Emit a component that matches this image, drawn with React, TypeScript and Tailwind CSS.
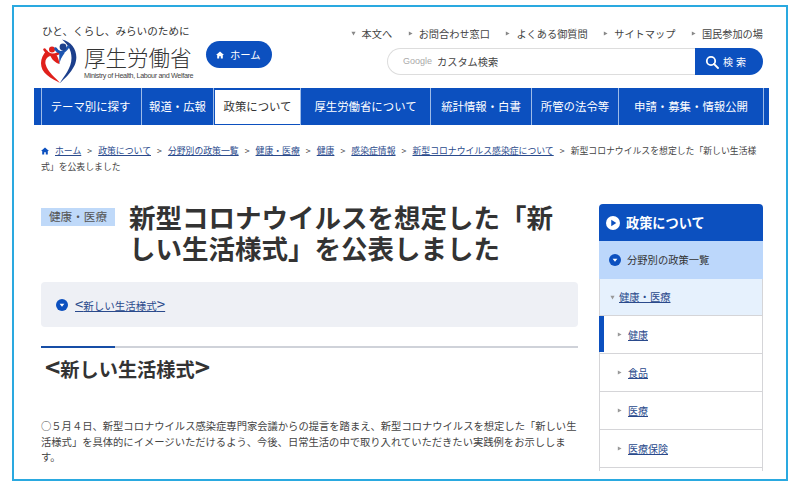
const font = { fontFamily: '"Noto Sans CJK JP", "Noto Sans", sans-serif' };

function Logo() {
  return (
    <svg width="38" height="44" viewBox="3 3 38 44" className="shrink-0 -mt-[1px]">
      <path d="M9 14 C1 22 1 33 9 39 C13 42.5 18 44.5 22 47 C18 42 9.5 36 7.5 28 C6.8 24 8.5 21.5 12 20 Z" fill="#e0201b" />
      <path d="M6.5 13.5 C10 19 15 20 20 17.5" fill="none" stroke="#e0201b" strokeWidth="2.6" strokeLinecap="round" />
      <path d="M12 19 C14 24 17 26.5 21.5 28 C21 24 20 21 18 18.5 Z" fill="#e0201b" />
      <circle cx="14" cy="13.5" r="3" fill="#e0201b" />
      <path d="M24 3.5 C36 6 41.5 19 36.5 29.5 C32.5 37.5 27 42 22 47 C26 40 33.5 32 33.5 22 C33.5 14 29.5 8 24 3.5 Z" fill="#1c3f8c" />
      <path d="M17.5 12.5 C20 17 25 18.5 30.5 10.5" fill="none" stroke="#1c55b0" strokeWidth="2.6" strokeLinecap="round" />
      <path d="M21.5 28 C22 24 23.5 21 27 16.5 L21 15.5 C21.5 20 21 24 21.5 28 Z" fill="#1c55b0" />
      <circle cx="25" cy="11" r="3.4" fill="#1c3f8c" />
    </svg>
  );
}

function HomeIcon({ size = 9, color = "#fff" }: { size?: number; color?: string }) {
  return (
    <svg width={size} height={size} viewBox="0 0 10 10" className="shrink-0">
      <path d="M5 0.5 L10 5 H8.5 V9.5 H6 V6.5 H4 V9.5 H1.5 V5 H0 Z" fill={color} />
    </svg>
  );
}

function Tri({ dir = "right", color = "#888" }: { dir?: "right" | "down"; color?: string }) {
  return (
    <svg width="5" height="5" viewBox="0 0 6 6" className="shrink-0">
      <path d={dir === "right" ? "M1 0.5 L5.5 3 L1 5.5 Z" : "M0.5 1 L5.5 1 L3 5.5 Z"} fill={color} />
    </svg>
  );
}

function Disc({ size, dir }: { size: number; dir: "right" | "down" }) {
  return (
    <svg width={size} height={size} viewBox="0 0 12 12" className="shrink-0">
      <circle cx="6" cy="6" r="6" fill={dir === "right" ? "#fff" : "#0c50bf"} />
      <path d={dir === "right" ? "M4.5 3.2 L8.8 6 L4.5 8.8 Z" : "M3.6 4.8 H8.4 L6 7.8 Z"} fill={dir === "right" ? "#0c50bf" : "#fff"} />
    </svg>
  );
}

const topLinks = [
  { t: "本文へ", d: "down" as const },
  { t: "お問合わせ窓口", d: "right" as const },
  { t: "よくある御質問", d: "right" as const },
  { t: "サイトマップ", d: "right" as const },
  { t: "国民参加の場", d: "right" as const },
];

const crumbs = ["ホーム", "政策について", "分野別の政策一覧", "健康・医療", "健康", "感染症情報", "新型コロナウイルス感染症について"];

const subItems = ["健康", "食品", "医療", "医療保険"];

export default function App() {
  return (
    <div className="w-[800px] h-[489px] bg-white pt-[5px] pl-3 overflow-hidden text-[#333]" style={font}>
      <div className="w-[776px] h-[476px] border-2 border-[#2aa9e0] overflow-hidden pl-[27px] pr-[23px]">
        <header className="flex justify-between h-[81px]">
          <div className="flex">
            <div>
              <p className="ml-[1px] text-[10.6px] leading-[16px] mt-4 whitespace-nowrap">ひと、くらし、みらいのために</p>
              <div className="flex mt-[1px]">
                <Logo />
                <div className="ml-[5px]">
                  <p className="text-[21.5px] leading-[24px] mt-[5px] whitespace-nowrap font-light">厚生労働省</p>
                  <p className="text-[7.2px] leading-[10px] mt-[2px] whitespace-nowrap tracking-[-0.35px] text-[#444]" style={{ fontFamily: '"Liberation Sans", sans-serif' }}>
                    Ministry of Health, Labour and Welfare
                  </p>
                </div>
              </div>
            </div>
            <div className="ml-[13px] mt-[34px] w-[66px] h-[27px] rounded-full bg-[#0c50bf] flex items-center justify-center gap-[6px] pr-[2px] text-white text-[10.3px]">
              <HomeIcon size={8} />
              <span>ホーム</span>
            </div>
          </div>
          <div className="flex flex-col items-end">
            <nav className="flex gap-[15.5px] mt-[19px] h-[16px] items-center text-[10.2px] whitespace-nowrap text-[#444]">
              {topLinks.map((l) => (
                <span key={l.t} className="flex items-center gap-[6px]">
                  <Tri dir={l.d} />
                  {l.t}
                </span>
              ))}
            </nav>
            <div className="flex mt-[6px] w-[376px] h-[27px]">
              <div className="flex-1 flex items-center pl-[15px] border border-[#ddd] border-r-0 rounded-l-full">
                <span className="text-[9px] text-[#aaa] mr-[5px]" style={{ fontFamily: '"Liberation Sans", sans-serif' }}>Google</span>
                <span className="text-[10.2px] text-[#444]">カスタム検索</span>
              </div>
              <div className="w-[68px] bg-[#0c50bf] rounded-r-full flex items-center pl-[10px] gap-[4px] text-white text-[10px] tracking-[3px]">
                <svg width="14" height="14" viewBox="0 0 14 14" fill="none" stroke="#fff" strokeWidth="1.8" className="shrink-0">
                  <circle cx="6" cy="6" r="4.2" />
                  <path d="M9 9 L13 13" strokeLinecap="round" />
                </svg>
                <span>検索</span>
              </div>
            </div>
          </div>
        </header>

        <nav className="-ml-[7px] w-[735px] h-[37px] bg-[#0c50bf] flex text-white text-[11.4px] whitespace-nowrap">
          <div className="w-[8px] border-r border-[#9dbbe8]" />
          <div className="w-[100px] border-r border-[#9dbbe8] flex items-center justify-center pr-[2px]">テーマ別に探す</div>
          <div className="w-[72px] border-r border-[#9dbbe8] flex items-center justify-center">報道・広報</div>
          <div className="w-[87px] border-r border-[#9dbbe8] flex items-center pl-[1px]">
            <div className="flex-1 h-[34px] bg-white text-[#333] flex items-center justify-center">政策について</div>
          </div>
          <div className="w-[130px] border-r border-[#9dbbe8] flex items-center justify-center">厚生労働省について</div>
          <div className="w-[101px] border-r border-[#9dbbe8] flex items-center justify-center">統計情報・白書</div>
          <div className="w-[87px] border-r border-[#9dbbe8] flex items-center justify-center">所管の法令等</div>
          <div className="w-[145px] border-r border-[#9dbbe8] flex items-center justify-center">申請・募集・情報公開</div>
        </nav>

        <p className="mt-[18px] w-[716px] text-[8.85px] leading-[15.5px] text-[#444]">
          <span className="inline-block mr-[6px] align-[-1px]"><HomeIcon size={8} color="#0c50bf" /></span>
          {crumbs.map((c) => (
            <span key={c}>
              <a className="underline text-[#2a4a8c]">{c}</a>
              <span className="mx-[6px]">&gt;</span>
            </span>
          ))}
          新型コロナウイルスを想定した「新しい生活様式」を公表しました
        </p>

        <div className="flex gap-[21px] mt-[30px]">
          <main className="w-[537px] shrink-0">
            <div className="flex items-start h-[62px]">
              <span className="mt-[4px] w-[74px] h-[18px] shrink-0 bg-[#bfd9f9] flex items-center justify-center text-[11.6px] text-[#555]">健康・医療</span>
              <h1 className="ml-[14px] -mt-[3px] w-[430px] text-[26.5px] leading-[31px] font-bold text-[#333]">
                新型コロナウイルスを想定した「新しい生活様式」を公表しました
              </h1>
            </div>
            <div className="mt-[16px] h-[45px] rounded-[4px] bg-[#eef0f5] flex items-center pl-[15px] gap-[7px]">
              <Disc size={12} dir="down" />
              <a className="underline text-[10.5px] text-[#2a4a8c] whitespace-nowrap">
                <span className="text-[15px] leading-none">&lt;</span>新しい生活様式<span className="text-[15px] leading-none">&gt;</span>
              </a>
            </div>
            <div className="mt-[19px] h-[2px] bg-[#cfd2d9]">
              <div className="w-[74px] h-full bg-[#174ea6]" />
            </div>
            <h2 className="mt-[5px] ml-[4px] text-[19.2px] leading-[28px] font-bold text-[#333] whitespace-nowrap">
              <span className="text-[26px] leading-none">&lt;</span>新しい生活様式<span className="text-[26px] leading-none">&gt;</span>
            </h2>
            <p className="mt-[35px] text-[10.3px] leading-[15.6px] text-[#444]">
              ○５月４日、新型コロナウイルス感染症専門家会議からの提言を踏まえ、新型コロナウイルスを想定した「新しい生活様式」を具体的にイメージいただけるよう、今後、日常生活の中で取り入れていただきたい実践例をお示しします。
            </p>
          </main>

          <aside className="w-[164px] shrink-0 h-[267px] overflow-hidden">
            <div className="h-[37px] bg-[#0c50bf] rounded-t-[4px] flex items-center pl-[7px] gap-[6px] text-white text-[13.2px] font-bold">
              <Disc size={14} dir="right" />
              <span>政策について</span>
            </div>
            <div className="h-[38px] bg-[#bcd7fb] flex items-center pl-[10px] gap-[6px] text-[10.3px] text-[#333]">
              <Disc size={12} dir="down" />
              <span>分野別の政策一覧</span>
            </div>
            <div className="h-[37px] bg-[#e6f1fd] border-x border-b border-[#d5d5d8] flex items-center pl-[10px] gap-[4px] text-[10.3px]">
              <Tri dir="down" color="#999" />
              <a className="underline text-[#2a4a8c]">健康・医療</a>
            </div>
            {subItems.map((s, i) => (
              <div key={s} className="relative h-[38px] border-x border-b border-[#d5d5d8] flex items-center pl-[17px] gap-[6px] text-[10px]">
                {i === 0 && <div className="absolute -left-px top-0 bottom-px w-[5px] bg-[#0c50bf]" />}
                <Tri color="#999" />
                <a className="underline text-[#2a4a8c]">{s}</a>
              </div>
            ))}
            <div className="h-[8px] border-x border-[#d5d5d8]" />
          </aside>
        </div>
      </div>
    </div>
  );
}
